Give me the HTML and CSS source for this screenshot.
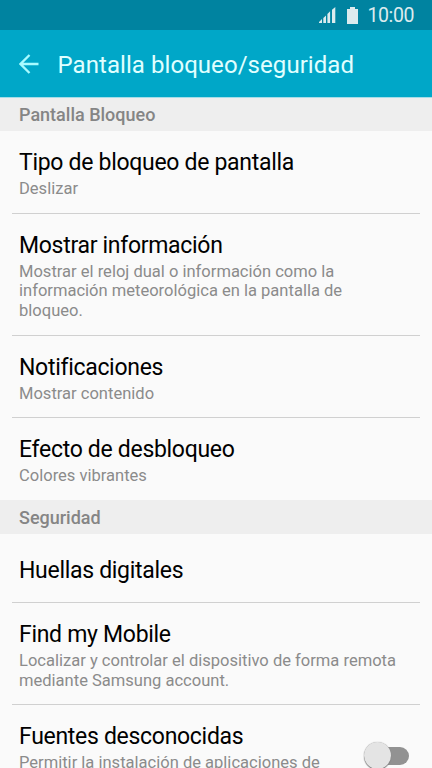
FILE: index.html
```html
<!DOCTYPE html>
<html lang="es">
<head>
<meta charset="utf-8">
<title>Pantalla bloqueo/seguridad</title>
<link rel="stylesheet" href="styles.css">
</head>
<body>
<div class="status">
<svg class="signal" width="17" height="16" viewBox="0 0 17 16"><path d="M0 16v-1l3-3v4zM4.300 16v-5l2.700-2.500V16zM8.400 16V7l2.700-2.700V16zM13 16V2.700L16.300 0v16z"/></svg>
<svg class="battery" width="11" height="17" viewBox="0 0 11 17"><path d="M3 0h5v2h3v15H0V2h3z"/></svg>
<span class="clock">10:00</span>
</div>
<header class="bar">
<svg class="back" width="20" height="20" viewBox="0 0 20 20"><path d="M19.500 10H2M10.500 1L1.500 10l9 9"/></svg>
<h1>Pantalla bloqueo/seguridad</h1>
</header>
<h2>Pantalla Bloqueo</h2>
<section>
<div class="row"><h3>Tipo de bloqueo de pantalla</h3><p>Deslizar</p></div>
<div class="row"><h3>Mostrar información</h3><p>Mostrar el reloj dual o información como la<br>información meteorológica en la pantalla de<br>bloqueo.</p></div>
<div class="row"><h3>Notificaciones</h3><p>Mostrar contenido</p></div>
<div class="row"><h3>Efecto de desbloqueo</h3><p>Colores vibrantes</p></div>
</section>
<h2>Seguridad</h2>
<section>
<div class="row single"><h3>Huellas digitales</h3></div>
<div class="row find"><h3>Find my Mobile</h3><p>Localizar y controlar el dispositivo de forma remota<br>mediante Samsung account.</p></div>
<div class="row switchrow"><div><h3>Fuentes desconocidas</h3><p>Permitir la instalación de aplicaciones de</p></div><div class="switch"><i></i></div></div>
</section>
</body>
</html>
```
FILE: styles.css
```css
* { box-sizing: border-box; }
body { margin: 0; height: 768px; overflow: hidden; background: #fafafa; font-family: Roboto, sans-serif; }
h1, h2, h3, p { margin: 0; font-weight: 400; white-space: nowrap; }
.status { height: 30px; background: #0083a0; display: flex; justify-content: flex-end; align-items: center; padding-right: 18px; color: #dcebee; }
.status svg { fill: #dcebee; }
.battery { margin: 0 9px 0 11px; }
.clock { font-size: 19.500px; line-height: 30px; letter-spacing: -.4px; position: relative; top: 1px; }
.bar { height: 67px; background: #00a7c8; display: flex; align-items: center; padding: 2px 0 0 19px; color: #e0ffff; }
.back { fill: none; stroke: #a8fbff; stroke-width: 2.300; margin: -2px 18.500px 0 0; }
h1 { font-size: 24px; line-height: 30px; letter-spacing: .06px; }
h2 { height: 34px; padding-left: 19px; background: #eee; color: #858585; font-size: 18px; line-height: 36px; font-weight: 500; }
.bar + h2 { border-top: 1px solid #a5dde8; line-height: 34px; }
.row { margin: 0 12px; padding: 18px 7px 13.900px; border-bottom: 1px solid #d0d0d0; }
.row:last-child { border-bottom: 0; }
h3 { font-size: 23px; line-height: 28px; letter-spacing: -.3px; color: #000; }
p { margin-top: 2px; font-size: 16.550px; line-height: 19.700px; color: #8b8b8b; }
section:first-of-type { height: 369px; }
.single { height: 69px; padding-top: 23px; }
.find { height: 102px; }
.switchrow { display: flex; justify-content: space-between; }
.switch { width: 45px; height: 18px; border-radius: 9px; background: #929292; margin: 24px 4px 0 0; position: relative; }
.switch i { position: absolute; left: 0; top: -5px; width: 27px; height: 27px; border-radius: 50%; background: #e4e4e4; box-shadow: 0 1px 1px #777, 0 0 1px #999; }
```
